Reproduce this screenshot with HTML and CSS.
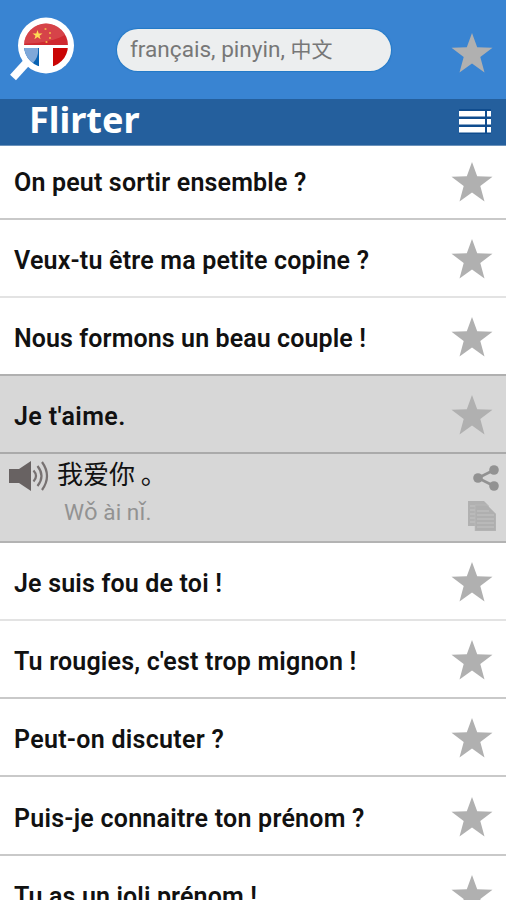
FILE: index.html
```html
<!DOCTYPE html>
<html lang="fr">
<head>
<meta charset="utf-8">
<title>Flirter</title>
<link rel="stylesheet" href="styles.css">
</head>
<body>
<svg class="defs" aria-hidden="true"><symbol id="star" viewBox="0 0 42 40"><path d="M21 0 26.2 14.2 41.500 14.7 29.3 24 33.5 39.500 21 30.6 8.5 39.500 12.7 24 .5 14.7 15.8 14.2Z"/></symbol></svg>
<header class="topbar">
  <svg class="logo" viewBox="0 0 68 68">
    <defs><clipPath id="disc"><circle cx="37" cy="28.5" r="22"/></clipPath></defs>
    <path d="M19 44 4 60.500" stroke="#fff" stroke-width="8"/>
    <circle cx="37" cy="28.5" r="28" fill="#fff"/>
    <g clip-path="url(#disc)">
      <path fill="#cf2930" d="M10 4h54v24H10z"/>
      <path fill="#dc5a5e" opacity=".55" d="M10 4h34q14 6 13 13-12 9-47 10z"/>
      <path fill="#0862b2" d="M10 31h20v24H10z"/>
      <path fill="#7fa8d9" d="M10 31h19q1 9-5 15L10 50z"/>
      <path fill="#ca0505" d="M44 31h17v24H44z"/>
    </g>
    <path fill="#ffdc55" d="m28.500 13 1.2 3.5h3.8l-3 2.2 1.1 3.6-3.1-2.2-3.1 2.2 1.1-3.6-3-2.2h3.8z"/>
    <g fill="#f3b04a"><circle cx="36.5" cy="12" r="1.1"/><circle cx="41" cy="16" r="1.1"/><circle cx="41" cy="21" r="1.1"/><circle cx="37.5" cy="25" r="1.1"/></g>
  </svg>
  <div class="search">français, pinyin, <span class="zh">中文</span></div>
  <svg class="star"><use href="#star"/></svg>
</header>
<div class="titlebar">
  <h1>Flirter</h1>
  <svg class="menu" viewBox="0 0 34 26"><path fill="#0f4c8e" d="M1 0h32v25H1z"/><path fill="#fff" d="M1 2h26v5.500H1zm28 0h4v5.500h-4zM1 10h26v5.500H1zm28 0h4v5.500h-4zM1 18h26v5.500H1zm28 0h4v5.500h-4z"/></svg>
</div>
<main>
  <div class="row first"><span class="phrase p1">On peut sortir ensemble ?</span><svg class="star"><use href="#star"/></svg></div>
  <div class="row pale"><span class="phrase p2">Veux-tu être ma petite copine ?</span><svg class="star"><use href="#star"/></svg></div>
  <div class="row dark"><span class="phrase p3">Nous formons un beau couple !</span><svg class="star"><use href="#star"/></svg></div>
  <div class="row open"><span class="phrase p4">Je t'aime.</span><svg class="star"><use href="#star"/></svg></div>
  <div class="detail">
    <svg class="speaker" viewBox="0 0 40 32"><path fill="#686262" d="M0 9h10L22 1v30L10 23H0z"/><path fill="none" stroke="#777171" stroke-width="2.2" d="M24.5 10.5q5 5.5 0 11M28.5 6q8 10 0 20M33 2q10 14 0 28"/></svg>
    <div class="translation"><p class="hanzi" lang="zh">我爱你 。</p><p class="pinyin">Wǒ ài nǐ.</p></div>
    <div class="actions">
      <svg class="share" viewBox="0 0 26 26"><path fill="none" stroke="#929292" stroke-width="2.6" d="M21 5 5 13l16 8"/><g fill="#929292"><circle cx="21" cy="5" r="4.8"/><circle cx="5" cy="13" r="4.8"/><circle cx="21" cy="21" r="4.8"/></g></svg>
      <svg class="copy" viewBox="0 0 28 30"><path fill="#b1b1b1" d="M0 0h16l5 5v20H0z"/><path stroke="#c3c3c3" d="M2 5h15M2 9h6M2 13h6M2 17h6M2 21h6"/><path fill="#afafaf" stroke="#bcbcbc" stroke-width=".6" d="M7 4h12l9 9v17H7z"/><path stroke="#c3c3c3" d="M9 10h12M9 14h17M9 18h17M9 22h17M9 26h17"/></svg>
    </div>
  </div>
  <div class="row pale"><span class="phrase p5">Je suis fou de toi !</span><svg class="star"><use href="#star"/></svg></div>
  <div class="row"><span class="phrase p6">Tu rougies, c'est trop mignon !</span><svg class="star"><use href="#star"/></svg></div>
  <div class="row"><span class="phrase p7">Peut-on discuter ?</span><svg class="star"><use href="#star"/></svg></div>
  <div class="row last"><span class="phrase p8">Puis-je connaitre ton prénom ?</span><svg class="star"><use href="#star"/></svg></div>
  <div class="row"><span class="phrase p9">Tu as un joli prénom !</span><svg class="star"><use href="#star"/></svg></div>
</main>
</body>
</html>
```
FILE: styles.css
```css
* { box-sizing: border-box; }
html, body { height: 900px; overflow: hidden; }
body { margin: 0; background: #fff; font-family: Roboto, "Noto Sans CJK SC", sans-serif; }
svg { display: block; flex: none; }
p, h1 { margin: 0; }
.defs { width: 0; height: 0; position: absolute; }
.topbar { height: 99px; background: #3984d2; display: flex; align-items: flex-start; padding: 0 13px 0 9px; }
.logo { width: 68px; height: 68px; margin-top: 17px; }
.search { width: 274px; height: 42px; margin: 29px 0 0 40px; padding-left: 13px; border-radius: 21px; background: #eceeef; color: #777; font-size: 22.6px; line-height: 42px; white-space: nowrap; box-shadow: 0 0 1px 1px #2379c6; }
.zh { font-size: 21px; }
.star { width: 42px; height: 40px; fill: #b0b0b0; margin-left: auto; }
.topbar .star { margin-top: 33px; }
.titlebar { height: 47px; background: #245f9d; border-bottom: 1px solid #6b92bb; display: flex; justify-content: space-between; align-items: flex-start; padding: 0 14px 0 29px; }
h1 { color: #fff; font: 700 36px/41px "Noto Sans", sans-serif; white-space: nowrap; }
.menu { width: 34px; height: 26px; margin-top: 10px; }
.row { height: 78px; display: flex; align-items: center; padding: 2px 13px 0 14px; border-bottom: 2px solid #c9c9c9; }
.first { height: 74px; padding-top: 0; }
.pale { border-color: #e3e3e3; }
.dark { border-color: #b0b0b0; }
.open { background: #d7d7d7; border-color: #aaa; }
.last { height: 79px; }
.phrase { font-size: 25px; font-weight: 600; line-height: 30px; padding-top: 4px; color: #111; white-space: nowrap; }
.first .phrase { padding-top: 2px; }
.p1 { letter-spacing: .17px; }
.p2 { letter-spacing: .19px; }
.p3 { letter-spacing: .1px; }
.p4 { letter-spacing: .4px; }
.p5 { letter-spacing: .18px; }
.p6 { letter-spacing: .19px; }
.p7 { letter-spacing: .28px; }
.p8 { letter-spacing: .24px; }
.p9 { letter-spacing: .14px; }
.detail { height: 89px; display: flex; background: #d7d7d7; border-bottom: 2px solid #b3b3b3; padding: 0 7px 0 9px; }
.speaker { width: 40px; height: 32px; margin-top: 6px; }
.translation { margin-left: 8px; }
.hanzi { height: 41px; font: 400 26px/38px "Noto Sans CJK SC", sans-serif; color: #111; white-space: nowrap; }
.pinyin { font-size: 22.6px; line-height: 36px; color: #929292; padding-left: 7px; }
.actions { margin-left: auto; display: flex; flex-direction: column; align-items: flex-end; padding-top: 11px; gap: 10px; }
.share { width: 26px; height: 26px; }
.copy { width: 28px; height: 30px; margin-right: 3px; }
```
